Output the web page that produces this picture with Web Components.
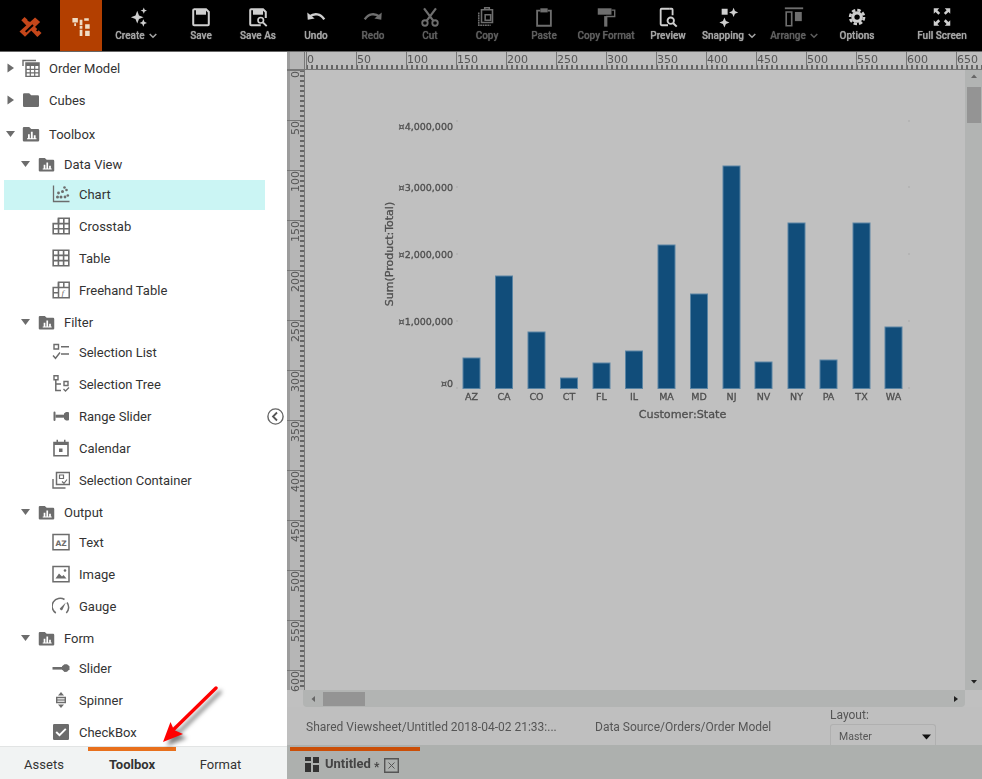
<!DOCTYPE html>
<html lang="en"><head><meta charset="utf-8"><title>Viewsheet designer</title>
<style>
html,body{margin:0;padding:0;height:779px;overflow:hidden;background:#fff;font-family:Roboto,"Liberation Sans",sans-serif}
#app{display:flex;flex-direction:column;width:982px;height:779px;position:relative;overflow:hidden}
#main{display:flex;height:727px}
</style></head><body>
<div id="app">
<app-toolbar>
  <tool-btn w="68" icon="create" menu>Create</tool-btn>
  <tool-btn w="62" icon="save">Save</tool-btn>
  <tool-btn w="52" icon="saveas">Save As</tool-btn>
  <tool-btn w="64" icon="undo">Undo</tool-btn>
  <tool-btn w="50" icon="redo" off>Redo</tool-btn>
  <tool-btn w="64" icon="cut" off>Cut</tool-btn>
  <tool-btn w="50" icon="copy" off>Copy</tool-btn>
  <tool-btn w="64" icon="paste" off>Paste</tool-btn>
  <tool-btn w="60" icon="format" off>Copy Format</tool-btn>
  <tool-btn w="64" icon="preview">Preview</tool-btn>
  <tool-btn w="58" icon="snap" menu>Snapping</tool-btn>
  <tool-btn w="72" icon="arrange" menu off>Arrange</tool-btn>
  <tool-btn w="54" icon="gear">Options</tool-btn>
  <tool-btn w="60" icon="full" push>Full Screen</tool-btn>
</app-toolbar>
<div id="main">
<side-panel>
  <tree-row level="0" caret="closed" icon="model">Order Model</tree-row>
  <tree-row level="0" caret="closed" icon="folder">Cubes</tree-row>
  <tree-row level="0" caret="open" icon="fbars" head gap>Toolbox</tree-row>
  <tree-row level="1" caret="open" icon="fbars" head>Data View</tree-row>
  <tree-row level="2" icon="chart" selected>Chart</tree-row>
  <tree-row level="2" icon="crosstab">Crosstab</tree-row>
  <tree-row level="2" icon="table">Table</tree-row>
  <tree-row level="2" icon="freehand">Freehand Table</tree-row>
  <tree-row level="1" caret="open" icon="fbars" head>Filter</tree-row>
  <tree-row level="2" icon="sellist">Selection List</tree-row>
  <tree-row level="2" icon="seltree">Selection Tree</tree-row>
  <tree-row level="2" icon="range">Range Slider</tree-row>
  <tree-row level="2" icon="calendar">Calendar</tree-row>
  <tree-row level="2" icon="container">Selection Container</tree-row>
  <tree-row level="1" caret="open" icon="fbars" head>Output</tree-row>
  <tree-row level="2" icon="text">Text</tree-row>
  <tree-row level="2" icon="image">Image</tree-row>
  <tree-row level="2" icon="gauge">Gauge</tree-row>
  <tree-row level="1" caret="open" icon="fbars" head>Form</tree-row>
  <tree-row level="2" icon="slider">Slider</tree-row>
  <tree-row level="2" icon="spinner">Spinner</tree-row>
  <tree-row level="2" icon="checkbox">CheckBox</tree-row>
</side-panel>
<design-area></design-area>
</div>
<callout-arrow></callout-arrow>
</div>
<script>
const ICONS={
model:'<path d="M1 7V1.500h13" fill="none" stroke="currentColor" stroke-width="1.400"/><path d="M4 4h13v13.500H4z" fill="none" stroke="currentColor" stroke-width="1.500"/><path d="M4 4h13v3H4z" fill="currentColor"/><path d="M8.300 7v10M12.700 7v10M4 10.400h13M4 13.900h13" stroke="currentColor" stroke-width="1.200"/>',
folder:'<path d="M1 3.500a1.200 1.200 0 0 1 1.200-1.200h5l2 2h6.600a1.200 1.200 0 0 1 1.200 1.200v9.300a1.200 1.200 0 0 1-1.200 1.200H2.200A1.200 1.200 0 0 1 1 14.800z" fill="currentColor"/>',
fbars:'<path d="M.8 3.300a1.200 1.200 0 0 1 1.200-1.200h5.200l2 2h6.800a1.200 1.200 0 0 1 1.200 1.200v10a1.200 1.200 0 0 1-1.200 1.200H2a1.200 1.200 0 0 1-1.200-1.200z" fill="currentColor"/><path d="M6 9.300h1.800v4H6zM8.900 6.800h1.800v6.500H8.900zM11.800 10.300h1.800v3h-1.800zM5 13.300h9.500v.9H5z" fill="#fff"/>',
chart:'<path d="M1.500 .5v16H17.500" fill="none" stroke="currentColor" stroke-width="1.300"/><g fill="currentColor"><circle cx="5.500" cy="12" r="1.500"/><circle cx="9" cy="12" r="1.500"/><circle cx="13" cy="12" r="1.400"/><circle cx="6.500" cy="8" r="1.400"/><circle cx="10.500" cy="6.500" r="1.500"/><circle cx="14.500" cy="5" r="1.300"/><circle cx="12.500" cy="2.500" r="1.300"/><circle cx="15.800" cy="10.500" r="1.300"/></g>',
crosstab:'<path d="M6.500 1.300h10.700v15.400H1.200V6.600h5.300z" fill="none" stroke="currentColor" stroke-width="1.600"/><path d="M11.800 1.300v15.400M6.500 1.300v15.400M1.200 11.700h16M6.500 6.600h10.700" stroke="currentColor" stroke-width="1.600"/>',
table:'<path d="M1.200 1.200h15.600v15.600H1.200z" fill="none" stroke="currentColor" stroke-width="1.600"/><path d="M6.400 1.200v15.600M11.600 1.200v15.600M1.200 6.400h15.600M1.200 11.600h15.600" stroke="currentColor" stroke-width="1.600"/>',
freehand:'<path d="M6.500 1.300h10.700v15.400H1.200V6.600h5.300z" fill="none" stroke="currentColor" stroke-width="1.500"/><path d="M11.800 1.300v5.300M6.500 1.300v15.400M1.200 11.700h5.300M6.500 6.600h10.700" stroke="currentColor" stroke-width="1.500"/><text x="9.500" y="15" font-family="Liberation Serif,serif" font-style="italic" font-size="9" fill="currentColor">f</text>',
sellist:'<path d="M2 1.500h4.500V6H2z" fill="none" stroke="currentColor" stroke-width="1.400"/><path d="M9 3.800h8M9 11h8" stroke="currentColor" stroke-width="1.500"/><path d="M1 12.500l2.500 2.800L8 9.500" fill="none" stroke="currentColor" stroke-width="1.400"/>',
seltree:'<path d="M2 .8h4v4H2z" fill="none" stroke="currentColor" stroke-width="1.400"/><path d="M3.800 5v10.500H9M3.800 9H9" fill="none" stroke="currentColor" stroke-width="1.500"/><path d="M12 6.500h4v4h-4z" fill="none" stroke="currentColor" stroke-width="1.400"/><path d="M11.500 14l2 2 3.500-3.500" fill="none" stroke="currentColor" stroke-width="1.300"/>',
range:'<path d="M1.500 5.500a1 1 0 0 1 2 0v7.500a1 1 0 0 1-2 0zM12 6.500l2-1.500h2a1 1 0 0 1 1 1v6.500a1 1 0 0 1-1 1h-2l-2-1.500z" fill="currentColor"/><path d="M3.500 9.200H13" stroke="currentColor" stroke-width="3"/>',
calendar:'<path d="M2 3.500h14v13.300H2z" fill="none" stroke="currentColor" stroke-width="1.600"/><path d="M2 3h14v3H2zM4.500.8h1.500V4H4.500zM12 .8h1.500V4H12zM7 9.500h3.500V13H7z" fill="currentColor"/>',
container:'<path d="M1 8v9h12.500" fill="none" stroke="currentColor" stroke-width="1.400"/><path d="M4.500 1.500h13v12h-13z" fill="none" stroke="currentColor" stroke-width="1.500"/><path d="M7.500 4h4v3.500h-4z" fill="none" stroke="currentColor" stroke-width="1.200"/><path d="M10 10.500l2 1.800 3-3.800" fill="none" stroke="currentColor" stroke-width="1.200"/>',
text:'<path d="M1 1.500h16v15.300H1z" fill="none" stroke="currentColor" stroke-width="1.500"/><text x="9" y="12.700" text-anchor="middle" font-family="DejaVu Sans,sans-serif" font-weight="700" font-size="7.500" fill="currentColor">AZ</text>',
image:'<path d="M1 1.500h16v15.300H1z" fill="none" stroke="currentColor" stroke-width="1.500"/><path d="M3.500 13.500l3.500-5 3 3 1.500-1.500 3 3.500z" fill="currentColor"/><circle cx="13" cy="5.500" r="1.300" fill="currentColor"/>',
gauge:'<path d="M3.800 16A8 8 0 0 1 12.500 2.500M15 5.500A8 8 0 0 1 14.300 16" fill="none" stroke="currentColor" stroke-width="1.500"/><path d="M7.800 11.500l6-6-3.500 7.500a1.800 1.800 0 0 1-2.500-1.500z" fill="currentColor"/>',
slider:'<path d="M.5 9.300h10" stroke="currentColor" stroke-width="2.600"/><path d="M10 6.500l2.500-2h2.500l2.500 2v3l-2.500 2.500-2.500.1-2.500-2.500z" transform="translate(0 .8)" fill="currentColor"/>',
spinner:'<path d="M9 1l3 3.500H6zM9 17l3-3.500H6z" fill="currentColor"/><path d="M4.700 6.500h8.600v5H4.700z" fill="none" stroke="currentColor" stroke-width="1.400"/><path d="M5 9h8" stroke="currentColor" stroke-width="1.200"/>',
checkbox:'<path d="M2.200 1h13.600A1.200 1.200 0 0 1 17 2.200v13.600a1.200 1.200 0 0 1-1.200 1.200H2.200A1.200 1.200 0 0 1 1 15.800V2.200A1.200 1.200 0 0 1 2.200 1z" fill="currentColor"/><path d="M4.200 9l3.300 3.200 6.300-6.400" fill="none" stroke="#fff" stroke-width="1.900"/>'
};
const TOOLS={
create:'<g fill="currentColor"><path d="M14 5l1.800 4.700L20.500 11.500l-4.700 1.800L14 18l-1.800-4.700L7.500 11.500l4.700-1.800z" transform="translate(-1.500 0) scale(1.060)"/><path d="M20.500 1.500l1 2.500 2.500 1-2.500 1-1 2.500-1-2.500L17 5l2.500-1z"/><path d="M20 14.500l1.200 2.800 2.800 1.200-2.800 1.200L20 22.500l-1.200-2.800-2.800-1.200 2.800-1.200z"/></g>',
save:'<path d="M4 3.500h13.500L20.500 6.500V20a1 1 0 0 1-1 1h-15a1 1 0 0 1-1-1V4.500a1 1 0 0 1 1-1z" fill="none" stroke="currentColor" stroke-width="2.200"/><path d="M6.500 3.500h11v6h-11z" fill="currentColor"/>',
saveas:'<path d="M15 21H4.500a1 1 0 0 1-1-1V4.500a1 1 0 0 1 1-1h13L20.500 6.500V13" fill="none" stroke="currentColor" stroke-width="2.200"/><path d="M6.500 3.500h11v6h-11z" fill="currentColor"/><circle cx="15" cy="15.500" r="3" fill="none" stroke="currentColor" stroke-width="1.800"/><path d="M17.500 18l4 4" stroke="currentColor" stroke-width="2"/>',
undo:'<path d="M2.500 7l.5 8 7.500-1.500z" fill="currentColor"/><path d="M5 11.500c5-4 12-3.500 16 3" fill="none" stroke="currentColor" stroke-width="2.600"/>',
redo:'<path d="M21.500 7l-.5 8-7.500-1.500z" fill="currentColor"/><path d="M19 11.500c-5-4-12-3.500-16 3" fill="none" stroke="currentColor" stroke-width="2.600"/>',
cut:'<g fill="none" stroke="currentColor" stroke-width="2"><circle cx="6.500" cy="18.500" r="3"/><circle cx="17.500" cy="18.500" r="3"/><path d="M8.500 16L18.500 2.500M15.500 16L5.500 2.500" stroke-width="2.400"/></g>',
copy:'<g fill="none" stroke="currentColor" stroke-width="1.700"><path d="M6 4h12v14H6zM9.500 4V2h5v2"/><path d="M3 7v14h13" stroke-dasharray="2 .6"/><path d="M10 9.500h6v6h-6z"/></g>',
paste:'<g fill="none" stroke="currentColor" stroke-width="2"><path d="M8 5H4.500v16.500h15V5H16"/></g><path d="M8 2.500h8v4.500H8z" fill="currentColor"/>',
format:'<path d="M3 2.500h15v7H3z" fill="currentColor"/><path d="M18 4.500h3.500v7h-9.500" fill="none" stroke="currentColor" stroke-width="1.500"/><path d="M10 11h3.500v11.500H10z" fill="currentColor"/>',
preview:'<path d="M14 3H5a1 1 0 0 0-1 1v16a1 1 0 0 0 1 1h7" fill="none" stroke="currentColor" stroke-width="2"/><path d="M14 3h2a1 1 0 0 1 1 1v6" fill="none" stroke="currentColor" stroke-width="2"/><circle cx="15" cy="16" r="3.500" fill="none" stroke="currentColor" stroke-width="2"/><path d="M17.500 18.500l4 4" stroke="currentColor" stroke-width="2.200"/>',
snap:'<g fill="currentColor"><path d="M4 3h6.500v6.500H4z"/><path d="M17 2l1.500 3.500L22 7l-3.500 1.500L17 12l-1.500-3.500L12 7l3.500-1.500z"/><path d="M7 12.500l1.600 3.900 3.900 1.600-3.900 1.600L7 23.500l-1.600-3.900L1.500 18l3.900-1.600z"/></g>',
arrange:'<path d="M2 2.500h20" stroke="currentColor" stroke-width="2"/><path d="M3.500 6.500h6v15h-6z" fill="none" stroke="currentColor" stroke-width="1.800"/><path d="M13 6.500h7.500v10H13z" fill="currentColor"/>',
gear:'<g transform="translate(2 2) scale(.84)"><circle cx="12" cy="12" r="7.500" fill="currentColor"/><circle cx="12" cy="12" r="9" fill="none" stroke="currentColor" stroke-width="3.500" stroke-dasharray="4.500 2.570"/><circle cx="12" cy="12" r="3.500" fill="#000"/></g>',
full:'<g fill="currentColor"><path d="M3 2.500h6l-2 2 3 3-2 2-3-3-2 2zM21 2.500h-6l2 2-3 3 2 2 3-3 2 2zM3 21.500h6l-2-2 3-3-2-2-3 3-2-2zM21 21.500h-6l2-2-3-3 2-2 3 3 2-2z"/></g>'
};
const def=(n,c)=>customElements.define(n,c);
function shadow(el,html){el.attachShadow({mode:'open'}).innerHTML=html;}

def('tool-btn',class extends HTMLElement{connectedCallback(){
 const w=this.getAttribute('w'),off=this.hasAttribute('off');
 shadow(this,`<style>
 :host{display:flex;flex-direction:column;align-items:center;flex:none;box-sizing:border-box;width:${w}px;height:51px;padding-top:6px;color:${off?'#6e6e6e':'#cfcfcf'};${this.hasAttribute('push')?'margin-left:28px;':''}}
 svg.i{width:22px;height:22px;display:block}
 .l{display:flex;align-items:center;gap:4px;margin-top:1px;font:500 10px/14px Roboto,sans-serif;white-space:nowrap;color:${off?'#5e5e5e':'#a4a4a4'};text-shadow:0 0 1px currentColor}
 </style><svg class="i" viewBox="0 0 24 24">${TOOLS[this.getAttribute('icon')]}</svg>
 <span class="l"><slot></slot>${this.hasAttribute('menu')?'<svg width="8" height="6" viewBox="0 0 8 6"><path d="M.7 1l3.300 3.300L7.300 1" fill="none" stroke="currentColor" stroke-width="1.500"/></svg>':''}</span>`);
}});

def('app-toolbar',class extends HTMLElement{connectedCallback(){
 shadow(this,`<style>
 :host{display:flex;flex:none;height:51px;background:#000;border-bottom:1px solid #666;overflow:hidden;filter:blur(.7px)}
 .logo{flex:none;width:60px;display:flex;align-items:center;justify-content:center;padding-top:3px;box-sizing:border-box}
 .act{flex:none;width:42px;background:#b33f00;display:flex;align-items:center;justify-content:center;padding-top:3px;box-sizing:border-box}
 </style>
 <div class="logo"><svg width="25" height="22" viewBox="0 0 26 24"><g fill="#c4461a"><path d="M3 4.500L6.500 1 25 18.500 20.500 23z"/><path d="M1 17L18 1.500l5.500 5L7 22.500z"/></g><g fill="#000"><path d="M7 16.500l8-7.500 1.500 1.500-8 7.500z"/><path d="M9.500 4.500l1.800-1.600 1.500 1.400-1.800 1.600zM19 15.500l1.800-1.600 1.500 1.400-1.800 1.600z"/></g></svg></div>
 <div class="act"><svg width="21" height="20" viewBox="0 0 22 22" fill="#efdcc4"><path d="M1 1h6v5H1zM3 7h2v3H3zM9 3h3v6H9zM14 1.500h5v2.500h-5zM9 10h3v3H9zM9 14h3v7H9zM15 8h5v5h-5zM15 15h5v6h-5z"/></svg></div>
 <slot></slot>`);
}});

def('x-icon',class extends HTMLElement{connectedCallback(){
 const s=this.getAttribute('size')||18;
 shadow(this,`<style>:host{display:block;flex:none;width:${s}px;height:${s}px;color:#6c6c6c}svg{display:block;width:100%;height:100%}</style><svg viewBox="0 0 18 18">${ICONS[this.getAttribute('name')]}</svg>`);
}});

def('tree-row',class extends HTMLElement{connectedCallback(){
 const lv=+this.getAttribute('level'),c=this.getAttribute('caret'),sel=this.hasAttribute('selected');
 const pad=[2,17,48][lv];
 const caret=c?`<svg class="c" width="9" height="10" viewBox="0 0 9 10">${c=='open'?'<path d="M0 2h9L4.500 8z"/>':'<path d="M1.500 .5L8 5 1.500 9.500z"/>'}</svg>`:'';
 shadow(this,`<style>
 :host{display:flex;align-items:center;flex:none;box-sizing:border-box;width:261px;height:32px;margin-left:4px;padding-left:${pad}px;font:13px/16px Roboto,"Liberation Sans",sans-serif;color:#333;white-space:nowrap;
 ${this.hasAttribute('head')?'margin-bottom:-2px;':''}${this.hasAttribute('gap')?'margin-top:2px;':''}
 ${sel?'background:linear-gradient(#cbf5f4,#cbf5f4) no-repeat 0 2px/100% 30px;':''}}
 .c{flex:none;fill:#6c6c6c;margin-right:${lv?8:7}px}
 x-icon{margin-right:9px}
 .t{padding-top:2px}
 </style>${caret}<x-icon name="${this.getAttribute('icon')}" size="${lv==1?17:18}"></x-icon><span class="t"><slot></slot></span>`);
}});

def('panel-tabs',class extends HTMLElement{connectedCallback(){
 shadow(this,`<style>
 :host{display:flex;flex:none;height:33px;box-sizing:border-box;background:#f1f3f3;border-top:1px solid #e2e4e4;font:13px Roboto,"Liberation Sans",sans-serif;color:#333}
 div{flex:none;width:88px;height:32px;box-sizing:border-box;padding-top:2px;display:flex;align-items:center;justify-content:center}
 .on{font-weight:700;border-top:4px solid #e8701d;padding-top:0;height:32px;padding-bottom:2px}
 div:last-child{padding-left:1px}
 </style><div>Assets</div><div class="on">Toolbox</div><div>Format</div>`);
}});

def('side-panel',class extends HTMLElement{connectedCallback(){
 shadow(this,`<style>
 :host{display:flex;flex-direction:column;flex:none;width:287px;height:727px;background:#fff;position:relative}
 .list{flex:1;min-height:0;overflow:hidden;display:flex;flex-direction:column}
 .col{position:absolute;left:267px;top:356px;width:17px;height:17px}
 </style><div class="list"><slot></slot></div>
 <svg class="col" viewBox="0 0 17 17"><circle cx="8.500" cy="8.500" r="7.600" fill="#fff" stroke="#666" stroke-width="1.400"/><path d="M10 4.500l-4 4 4 4" fill="none" stroke="#555" stroke-width="1.800"/></svg>
 <panel-tabs></panel-tabs>`);
}});

def('h-ruler',class extends HTMLElement{connectedCallback(){
 let h='';for(let n=0;n<=650;n+=50)h+=`<span>${n}</span>`;
 shadow(this,`<style>
 :host{display:flex;flex:1;min-width:0;height:18px;overflow:hidden;box-sizing:border-box;padding-left:1px;border-bottom:1px solid #777;background:repeating-linear-gradient(90deg,#666 0 2px,transparent 2px 5px) 1px 13px/100% 4px no-repeat}
 span{flex:none;width:50px;box-sizing:border-box;border-left:1px solid #777;font:11px/15px "DejaVu Sans",sans-serif;color:#555}
 </style>${h}`);
}});

def('v-ruler',class extends HTMLElement{connectedCallback(){
 let h='';for(let n=0;n<=600;n+=50)h+=`<div><span>${n}</span></div>`;
 shadow(this,`<style>
 :host{display:block;flex:none;width:18px;height:620px;box-sizing:border-box;background:repeating-linear-gradient(180deg,#666 0 2px,transparent 2px 5px) 13px 0/4px 100% no-repeat,linear-gradient(90deg,#9c9c9c 0 3px,#b6b6b6 3px);border-right:1px solid #777}
 div{height:50px;box-sizing:border-box;border-top:1px solid #777;padding-left:3px;display:flex;align-items:flex-start}
 div:last-child{height:20px}
 span{writing-mode:vertical-rl;transform:rotate(180deg);font:11px/12px "DejaVu Sans",sans-serif;color:#555}
 </style>${h}`);
}});

def('bar-chart',class extends HTMLElement{connectedCallback(){
 const d=[['AZ',463,358],['CA',495.500,276],['CO',528,332],['CT',560.500,378],['FL',593,363],['IL',625.500,351],['MA',658,245],['MD',690.500,294],['NJ',723,166],['NV',755,362],['NY',788,223],['PA',820,360],['TX',853,223],['WA',885,327]];
 const bars=d.map(([s,x,y])=>`<rect x="${x}" y="${y}" width="17" height="${388.500-y}"/>`).join('');
 const xl=d.map(([s,x])=>`<text x="${x+8.500}" y="399.500" text-anchor="middle">${s}</text>`).join('');
 const yl=[['¤4,000,000',129.500],['¤3,000,000',190.500],['¤2,000,000',257.500],['¤1,000,000',325],['¤0',386.500]].map(([t,y])=>`<text x="453" y="${y}" text-anchor="end">${t}</text>`).join('');
 const ticks=[121,187,254,321,388].map(y=>`<path d="M456 ${y}h2M908 ${y}h2" stroke="#aaa"/>`).join('');
 shadow(this,`<style>:host{display:block;flex:1;min-width:0;height:620px;background:#c0c0c0}svg{display:block}
 text{font-family:"DejaVu Sans",sans-serif;font-size:9.500px;font-weight:400;fill:#4f4f4f;stroke:#4f4f4f;stroke-width:.3px}
 rect{fill:#114d7a;stroke:#5a84a3;stroke-width:1}
 </style><svg width="660" height="620" viewBox="305 70 660 620">${ticks}${bars}${xl}${yl}
 <text x="682.500" y="418" text-anchor="middle" style="font-size:11.200px">Customer:State</text>
 <text transform="translate(393 254) rotate(-90)" text-anchor="middle" style="font-size:11px">Sum(Product:Total)</text></svg>`);
}});

def('v-scroll',class extends HTMLElement{connectedCallback(){
 shadow(this,`<style>:host{display:flex;flex-direction:column;align-items:center;flex:none;width:17px;height:620px;background:#b2b4b3;box-sizing:border-box;padding-top:3px}
 .t{width:14px;height:36px;background:#949494;margin-top:7px}.s{flex:1}</style>
 <svg width="8" height="7" viewBox="0 0 8 7"><path d="M4 1.500L7 5H1z" fill="#666"/></svg><div class="t"></div><div class="s"></div>
 <svg width="8" height="7" viewBox="0 0 8 7" style="margin-bottom:5px"><path d="M4 5.500L7 2H1z" fill="#222"/></svg>`);
}});

def('h-scroll',class extends HTMLElement{connectedCallback(){
 shadow(this,`<style>:host{display:flex;align-items:center;flex:none;box-sizing:border-box;width:662px;margin-left:16px;height:17px;background:#b2b4b3;border-radius:0 0 4px 4px;padding:0 6px}
 .t{width:42px;height:14px;background:#949494;margin-left:7px}.s{flex:1}</style>
 <svg width="6" height="8" viewBox="0 0 6 8" style="margin-left:1px"><path d="M1.500 4L5 1v6z" fill="#666"/></svg><div class="t"></div><div class="s"></div>
 <svg width="6" height="8" viewBox="0 0 6 8"><path d="M5 4L1 1v6z" fill="#222"/></svg>`);
}});

def('status-bar',class extends HTMLElement{connectedCallback(){
 shadow(this,`<style>:host{display:flex;align-items:center;flex:none;height:38px;box-sizing:border-box;padding-left:19px;background:#bfbfbf;font:12px/14px Roboto,"Liberation Sans",sans-serif;color:#555;white-space:nowrap}
 .a{width:289px;margin-top:2px}.b{width:235px;margin-top:2px}
 .l{display:flex;flex-direction:column;height:38px;width:106px}
 .l b{font-weight:400;height:16px;line-height:16px}
 .sel{margin-top:1px;height:21px;box-sizing:border-box;border:1px solid #b0b0b0;border-bottom:0;border-radius:3px 3px 0 0;display:flex;align-items:center;justify-content:space-between;padding:4px 4px 0 8px;font-size:10.500px}
 </style><span class="a">Shared Viewsheet/Untitled 2018-04-02 21:33:...</span><span class="b">Data Source/Orders/Order Model</span>
 <div class="l"><b>Layout:</b><div class="sel"><span>Master</span><svg width="9" height="6" viewBox="0 0 9 6"><path d="M0 .5h9L4.500 5.500z" fill="#111"/></svg></div></div>`);
}});

def('doc-tabs',class extends HTMLElement{connectedCallback(){
 shadow(this,`<style>:host{display:flex;flex:none;height:34px;background:#adb0ae;box-sizing:border-box;padding:2px 0 0 3px;font:700 13px/14px Roboto,"Liberation Sans",sans-serif;color:#444}
 .t{display:flex;align-items:flex-start;width:130px;box-sizing:border-box;border-top:4px solid #cb4f08;padding:6px 0 0 15px}
 .n{margin-left:6px;margin-top:0}.st{margin:3px 0 0 3px;font-size:12px;font-weight:700}
 .x{margin:1px 0 0 5px}</style>
 <div class="t"><svg width="14" height="15" viewBox="0 0 14 15" fill="#333"><path d="M0 0h6v4H0zM8 0h6v6H8zM0 6h6v9H0zM8 8h6v7H8z"/></svg><span class="n">Untitled</span><span class="st">*</span>
 <svg class="x" width="15" height="15" viewBox="0 0 15 15"><path d="M.7.7h13.600v13.600H.7z" fill="none" stroke="#555" stroke-width="1.400"/><path d="M4.500 4.500l6 6M10.500 4.500l-6 6" stroke="#555"/></svg></div>`);
}});

def('design-area',class extends HTMLElement{connectedCallback(){
 shadow(this,`<style>:host{display:flex;flex-direction:column;flex:1;min-width:0;background:#c0c0c0;filter:blur(.7px);overflow:hidden}
 .top{display:flex;flex:none;height:18px;background:#bdbdbd}.corner{flex:none;width:18px;background:linear-gradient(90deg,#9c9c9c 0 3px,#b6b6b6 3px);border-bottom:1px solid #777;border-right:1px solid #777;box-sizing:border-box}
 .mid{display:flex;flex:none;height:620px}
 .hs{flex:none;height:17px;display:flex;background:#c0c0c0}
 </style><div class="top"><div class="corner"></div><h-ruler></h-ruler></div>
 <div class="mid"><v-ruler></v-ruler><bar-chart></bar-chart><v-scroll></v-scroll></div>
 <div class="hs"><h-scroll></h-scroll></div><status-bar></status-bar><doc-tabs></doc-tabs>`);
}});

def('callout-arrow',class extends HTMLElement{connectedCallback(){
 shadow(this,`<style>:host{position:absolute;left:155px;top:680px;width:80px;height:75px;pointer-events:none}svg{filter:drop-shadow(4px 4px 2px rgba(0,0,0,.5));overflow:visible}</style>
 <svg width="80" height="75" viewBox="155 680 80 75"><path d="M216 688L170 733" stroke="#f00" stroke-width="3.400" stroke-linecap="round"/><path d="M163 742l7.500-20 3.500 8 9 4z" fill="#f00"/></svg>`);
}});
</script>
</body></html>
